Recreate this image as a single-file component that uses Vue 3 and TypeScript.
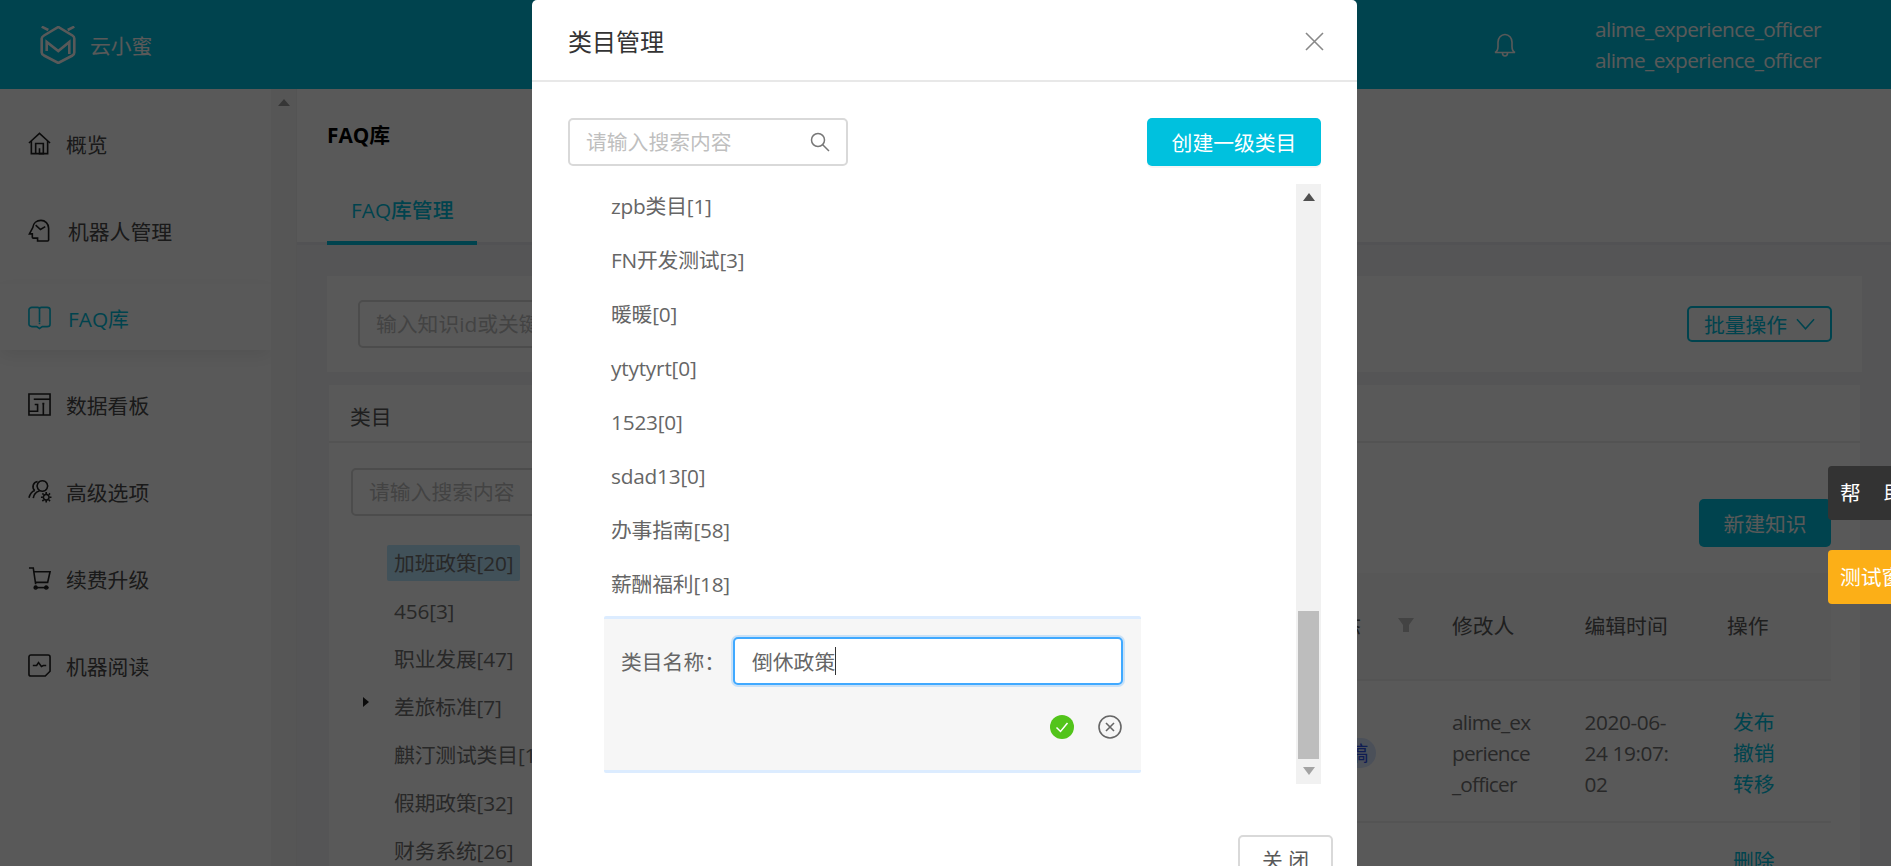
<script setup lang="ts">
interface NavItem {
  label: string
  paths: string[]
  active?: boolean
  nudge?: boolean
}

const navItems: NavItem[] = [
  { label: '概览', paths: ['M1 11.500 12 1.500 23 11.500', 'M3.500 9.500v13h17v-13', 'M8 22.500V12h8v10.500h-4V17'] },
  {
    label: '机器人管理',
    nudge: true,
    paths: [
      'M5 9C5.500 4.500 9 1.500 13.500 1.500c4.500 0 8 3.500 8 8v12.500c0 .5-.5 1-1 1H10v-3H5.500c-.5 0-1-.5-1-1V15.500H1.500z',
      'M8 6.500l5 4.500 5-3',
    ],
  },
  {
    label: 'FAQ库',
    active: true,
    nudge: true,
    paths: [
      'M4 1.500h6c1 0 2 .5 2 1.500 0-1 1-1.500 2-1.500h6c1.500 0 3 1 3 2.500V19c0 1.500-1.500 2.500-3 2.500h-5L12 23.500 9 21.500H4c-1.500 0-3-1-3-2.500V4c0-1.500 1.500-2.500 3-2.500z',
      'M12 3v14',
      'M12 17.500v1.500',
    ],
  },
  {
    label: '数据看板',
    paths: ['M1 1h22v22H1z', 'M6 6.500h17', 'M1 19h9v-7H7', 'M16 11v12', 'M15 11h2'],
  },
  {
    label: '高级选项',
    paths: [
      'M15 .8a5.500 5.500 0 1 1-.01 0z',
      'M10 1.500a5.500 5.500 0 0 0-3 9.500',
      'M7 11c-3 1-5 4-6 7.500',
      'M12 11.500c-4 1-6 4-6.500 7.500',
      'M19 15a3 3 0 1 1-.01 0z',
      'M19 12.500v2M19 21.500v2M13.500 18h2M22.500 18h2M15 14l1.400 1.400M21.600 20.600 23 22M15 22l1.400-1.400M21.600 15.400 23 14',
    ],
  },
  {
    label: '续费升级',
    paths: [
      'M1 1h4.500l2.500 17',
      'M6 5h17l-2.500 11H7.500',
      'M6.500 21.500h15',
      'M8 20a1.500 1.500 0 1 1-.01 0z',
      'M19 20a1.500 1.500 0 1 1-.01 0z',
    ],
  },
  {
    label: '机器阅读',
    paths: [
      'M3 1h18a2 2 0 0 1 2 2v15l-5 5H3a2 2 0 0 1-2-2V3a2 2 0 0 1 2-2z',
      'M5 12h4l2-3 3 4 2-1h3',
    ],
  },
]

const treeRows = ['加班政策[20]', '456[3]', '职业发展[47]', '差旅标准[7]', '麒汀测试类目[12]', '假期政策[32]', '财务系统[26]']
const modalRows = ['zpb类目[1]', 'FN开发测试[3]', '暖暖[0]', 'ytytyrt[0]', '1523[0]', 'sdad13[0]', '办事指南[58]', '薪酬福利[18]']
</script>

<template>
  <div class="app">
    <header class="topbar">
      <div class="brand">
        <svg class="logo" viewBox="0 0 38 38" fill="none">
          <path d="M19.300 1 33.500 9.500c1.200.7 1.800 1.700 1.800 3v14c0 1.300-.6 2.300-1.800 3L19.300 37 5 29.500c-1.200-.7-2.300-1.700-2.300-3v-14c0-1.300 1.100-2.300 2.300-3z" />
          <path d="M2.700.7 9.300 4M35.300.7 28.700 4" />
          <path d="M7.700 25V16l11.600 9 11-9v12" />
        </svg>
        <span class="brand-name">云小蜜</span>
      </div>
      <div class="account">
        <svg class="bell" viewBox="0 0 22 24" fill="none">
          <path d="M1 19.500c2-1 3-3 3-6V9c0-4 3-7.500 7-7.500s7 3.500 7 7.500v4.500c0 3 1 5 3 6z" />
          <path d="M8.500 20c0 2 1 3 2.500 3s2.500-1 2.500-3" />
        </svg>
        <div class="users">
          <div>alime_experience_officer</div>
          <div>alime_experience_officer</div>
        </div>
      </div>
    </header>

    <div class="main">
      <aside class="sidebar">
        <nav class="nav">
          <div v-for="item in navItems" :key="item.label" class="nav-item" :class="{ active: item.active, nudge: item.nudge }">
            <svg class="nav-icon" viewBox="0 0 24 24" fill="none">
              <path v-for="d in item.paths" :key="d" :d="d" />
            </svg>
            <span>{{ item.label }}</span>
          </div>
        </nav>
        <div class="side-track"><i class="side-arrow"></i></div>
      </aside>

      <section class="content">
        <div class="page-head">
          <div class="page-title">FAQ库</div>
          <div class="tabs"><span class="tab">FAQ库管理</span></div>
        </div>

        <div class="page-body">
          <div class="filter-card">
            <input class="field wide" placeholder="输入知识id或关键词搜索内容" />
            <button class="batch">批量操作
              <svg class="chevron" viewBox="0 0 20 12" fill="none"><path d="M1 1l9 10 9-10" /></svg>
            </button>
          </div>

          <div class="kb-card">
            <div class="kb-head">类目</div>
            <div class="kb-body">
              <div class="tree">
                <input class="field" placeholder="请输入搜索内容" />
                <div class="tree-list">
                  <div v-for="(row, i) in treeRows" :key="row" class="tree-row">
                    <i v-if="i === 3" class="tree-caret"></i>
                    <span class="tree-label" :class="{ selected: i === 0 }">{{ row }}</span>
                  </div>
                </div>
              </div>

              <div class="records">
                <div class="records-bar"><button class="create">新建知识</button></div>
                <div class="table-row table-head">
                  <div>知识标题</div>
                  <div class="status-head">状态
                    <svg class="funnel" viewBox="0 0 16 14"><path d="M0 0h16l-5 7v7H5V7z" /></svg>
                  </div>
                  <div>修改人</div>
                  <div>编辑时间</div>
                  <div>操作</div>
                </div>
                <div class="table-row table-cells">
                  <div>年假如何计算</div>
                  <div><span class="badge">草稿</span></div>
                  <div class="wrap user">alime_experience_officer</div>
                  <div class="wrap">2020-06-24 19:07:02</div>
                  <div class="ops"><a>发布</a><a>撤销</a><a>转移</a></div>
                </div>
                <div class="table-row table-cells last">
                  <div>加班申请流程</div>
                  <div></div>
                  <div class="wrap"></div>
                  <div class="wrap"></div>
                  <div class="ops"><a>删除</a></div>
                </div>
              </div>
            </div>
          </div>
        </div>
      </section>
    </div>

    <div class="mask">
      <div class="modal">
        <div class="modal-head">
          <span>类目管理</span>
          <svg class="close" viewBox="0 0 19 19" fill="none"><path d="M1 1l17 17M18 1 1 18" /></svg>
        </div>
        <div class="modal-body">
          <div class="modal-tools">
            <div class="modal-search">
              <input placeholder="请输入搜索内容" />
              <svg viewBox="0 0 20 20" fill="none"><circle cx="8" cy="8" r="6.500" /><path d="M12.500 12.500 19 19" /></svg>
            </div>
            <button class="primary">创建一级类目</button>
          </div>
          <div class="modal-tree">
            <div class="modal-list">
              <div v-for="row in modalRows" :key="row" class="modal-row">{{ row }}</div>
              <div class="edit-form">
                <div class="edit-line">
                  <span class="edit-label">类目名称：</span>
                  <div class="edit-input">倒休政策<i class="caret"></i></div>
                </div>
                <div class="edit-actions">
                  <svg viewBox="0 0 24 24"><circle cx="12" cy="12" r="12" fill="#52c41a" /><path d="M6.500 12.500 10.500 16.500 17.500 8" fill="none" stroke="#fff" stroke-width="1.500" /></svg>
                  <svg viewBox="0 0 24 24" fill="none" stroke="#666" stroke-width="1.600"><circle cx="12" cy="12" r="11" /><path d="M8 8l8 8M16 8l-8 8" /></svg>
                </div>
              </div>
            </div>
            <div class="modal-scroll">
              <i class="arrow-up"></i>
              <i class="thumb"></i>
              <i class="arrow-down"></i>
            </div>
          </div>
          <div class="modal-foot"><button class="ghost">关 闭</button></div>
        </div>
      </div>
    </div>

    <div class="float-tab help">帮助</div>
    <div class="float-tab test">测试窗口</div>
  </div>
</template>

<style>
html,
body {
  margin: 0;
  overflow: hidden;
}
</style>

<style scoped>
* {
  box-sizing: border-box;
}
.app {
  position: relative;
  height: 866px;
  overflow: hidden;
  display: flex;
  flex-direction: column;
  font-family: 'Open Sans', 'Noto Sans CJK SC', sans-serif;
  font-size: 20.8px;
  color: #595959;
  background: #f3f3f6;
}
button,
input {
  font: inherit;
}

/* top bar */
.topbar {
  flex: 0 0 89px;
  display: flex;
  align-items: center;
  padding: 0 70px 0 39px;
  background: #00c1de;
  color: #fff;
}
.brand {
  display: flex;
  align-items: center;
  gap: 13px;
}
.logo {
  width: 38px;
  height: 38px;
  stroke: #fff;
  stroke-width: 2.6;
}
.brand-name {
  font-size: 20.8px;
}
.account {
  margin-left: auto;
  display: flex;
  align-items: center;
  gap: 79px;
}
.bell {
  width: 22px;
  height: 24px;
  stroke: #fff;
  stroke-width: 1.6;
}
.users {
  letter-spacing: -0.58px;
  line-height: 31px;
}

/* sidebar */
.main {
  flex: 1;
  display: flex;
  min-height: 0;
}
.sidebar {
  flex: 0 0 297px;
  display: flex;
  background: #fff;
  border-right: 1px solid #f0f0f0;
}
.nav {
  flex: 0 0 271px;
  padding-top: 21px;
  display: flex;
  flex-direction: column;
  gap: 21px;
}
.nav-item {
  height: 66px;
  flex: none;
  display: flex;
  align-items: center;
  gap: 15px;
  padding: 1px 0 0 28px;
  color: #4a4a4a;
}
.nav-item.nudge {
  gap: 17px;
}
.nav-item.active {
  color: #00c1de;
  background: #fff;
  box-shadow: 0 6px 16px rgba(0, 0, 0, 0.08);
}
.nav-icon {
  width: 23px;
  height: 23px;
  flex: none;
  overflow: visible;
  stroke: #222;
  stroke-width: 1.7;
}
.active .nav-icon {
  stroke: #00c1de;
}
.side-track {
  flex: 1;
  display: flex;
  justify-content: center;
  padding-top: 10px;
  background: #f7f7f7;
}
.side-arrow {
  width: 0;
  height: 0;
  border: 6px solid transparent;
  border-top: 0;
  border-bottom: 7px solid #9a9a9a;
}

/* content */
.content {
  flex: 1;
  min-width: 0;
  display: flex;
  flex-direction: column;
}
.page-head {
  flex: 0 0 156px;
  padding: 32px 0 0 30px;
  background: #fff;
  border-bottom: 3px solid #ececf0;
  display: flex;
  flex-direction: column;
  justify-content: space-between;
}
.page-title {
  font-weight: 700;
  color: #000;
  line-height: 28px;
}
.tabs {
  margin-bottom: -3px;
  display: flex;
}
.tab {
  width: 150px;
  height: 61px;
  padding: 10px 0 0 24px;
  font-weight: 500;
  color: #00c1de;
  border-bottom: 4px solid #00c1de;
  white-space: nowrap;
}
.page-body {
  flex: 1;
  padding: 31px 29px 0 30px;
  display: flex;
  flex-direction: column;
  gap: 13px;
  min-height: 0;
}
.filter-card {
  flex: 0 0 96px;
  background: #fff;
  display: flex;
  align-items: center;
  justify-content: space-between;
  padding: 0 30px 0 31px;
}
.field {
  width: 300px;
  height: 48px;
  padding: 0 16px;
  border: 2px solid #d9d9d9;
  border-radius: 5px;
  color: #595959;
  outline: none;
  background: #fff;
}
.field.wide {
  width: 500px;
}
.field::placeholder {
  color: #bfbfbf;
  opacity: 1;
}
.batch {
  width: 145px;
  height: 36px;
  display: flex;
  align-items: center;
  justify-content: center;
  gap: 9px;
  padding: 0;
  background: #fff;
  color: #00c1de;
  border: 2px solid #00c1de;
  border-radius: 5px;
}
.chevron {
  width: 19px;
  height: 12px;
  stroke: #00c1de;
  stroke-width: 1.6;
}
.kb-card {
  flex: 1;
  margin: 0 2px;
  background: #fff;
  display: flex;
  flex-direction: column;
  min-height: 0;
}
.kb-head {
  flex: 0 0 58px;
  padding: 17px 0 0 21px;
  line-height: 30px;
  border-bottom: 2px solid #eee;
  color: #595959;
}
.kb-body {
  flex: 1;
  display: flex;
  min-height: 0;
}
.tree {
  flex: 0 0 370px;
  padding: 25px 0 0 22px;
}
.tree-list {
  margin-top: 29px;
}
.tree-row {
  position: relative;
  height: 48px;
  padding-left: 36px;
  color: #737373;
  white-space: nowrap;
  line-height: 36px;
}
.tree-label {
  display: inline-block;
  height: 36px;
  padding: 0 7px;
  border-radius: 2px;
  letter-spacing: -0.15px;
}
.tree-label.selected {
  background: #bae7ff;
}
.tree-caret {
  position: absolute;
  left: 12px;
  top: 8px;
  width: 0;
  height: 0;
  border: 5px solid transparent;
  border-right: 0;
  border-left: 6px solid #222;
}
.records {
  flex: 1;
  min-width: 0;
  padding-right: 29px;
}
.records-bar {
  height: 130px;
  padding-top: 56px;
  display: flex;
  justify-content: flex-end;
}
.create {
  width: 132px;
  height: 48px;
  padding: 0;
  color: #fff;
  background: #00c1de;
  border: 0;
  border-radius: 5px;
}
.table-row {
  display: grid;
  grid-template-columns: 1fr 132.500px 132.500px 142.500px 104px;
  border-bottom: 2px solid #f0f0f0;
}
.table-head {
  height: 108px;
  padding-bottom: 2px;
  align-items: center;
  background: #fafafa;
  color: #595959;
}
.status-head {
  display: flex;
  align-items: center;
  white-space: nowrap;
}
.funnel {
  width: 16px;
  height: 14px;
  margin-left: 37px;
  fill: #bfbfbf;
}
.table-cells {
  height: 142px;
  padding-top: 5px;
  align-items: center;
  color: #737373;
  line-height: 31px;
}
.wrap {
  width: 85px;
  word-break: break-all;
  letter-spacing: -0.4px;
}
.wrap.user {
  letter-spacing: -0.8px;
}
.badge {
  display: inline-block;
  width: 56px;
  height: 30px;
  line-height: 30px;
  text-align: center;
  border-radius: 15px;
  color: #2f54eb;
  background: #d6e4ff;
}
.ops {
  display: flex;
  flex-direction: column;
  padding-left: 6px;
  color: #00c1de;
}
.table-cells.last {
  align-items: start;
  padding-top: 23px;
}

/* modal */
.mask {
  position: absolute;
  inset: 0;
  z-index: 5;
  background: rgba(0, 0, 0, 0.65);
}
.modal {
  width: 825px;
  height: 900px;
  margin-left: 532px;
  background: #fff;
  border-radius: 5px;
  color: #666;
}
.modal-head {
  height: 82px;
  padding: 0 33px 0 36px;
  display: flex;
  align-items: center;
  justify-content: space-between;
  font-size: 24px;
  color: #333;
  border-bottom: 2px solid #e8e8e8;
}
.close {
  width: 19px;
  height: 19px;
  margin-top: 3px;
  stroke: #888;
  stroke-width: 1.6;
}
.modal-body {
  padding: 36px 36px 0;
}
.modal-tools {
  display: flex;
  justify-content: space-between;
  height: 48px;
}
.modal-search {
  position: relative;
  width: 280px;
  height: 48px;
}
.modal-search input {
  width: 100%;
  height: 100%;
  padding: 0 48px 0 16px;
  border: 2px solid #d9d9d9;
  border-radius: 5px;
  outline: none;
}
.modal-search input::placeholder {
  color: #bfbfbf;
  opacity: 1;
}
.modal-search svg {
  position: absolute;
  right: 18px;
  top: 14px;
  width: 20px;
  height: 20px;
  stroke: #777;
  stroke-width: 1.5;
}
.primary {
  width: 174px;
  height: 48px;
  padding: 0;
  color: #fff;
  background: #00c1de;
  border: 0;
  border-radius: 5px;
  box-shadow: 0 2px 0 rgba(0, 0, 0, 0.04);
}
.modal-tree {
  display: flex;
  height: 600px;
  margin-top: 18px;
}
.modal-list {
  flex: 1;
  min-width: 0;
  overflow: hidden;
}
.modal-row {
  height: 54px;
  line-height: 54px;
  padding-left: 43px;
  letter-spacing: -0.2px;
}
.modal-row:first-child {
  margin-top: -5px;
}
.edit-form {
  width: 537px;
  height: 157px;
  margin: 5px 0 0 36px;
  padding: 18px 18px 0 17px;
  background: #f6f6f6;
  border-top: 3px solid #dcecff;
  border-bottom: 3px solid #dcecff;
  border-radius: 2px;
}
.edit-line {
  display: flex;
  align-items: center;
  justify-content: space-between;
}
.edit-label {
  white-space: nowrap;
}
.edit-input {
  width: 390px;
  height: 48px;
  display: flex;
  align-items: center;
  padding-left: 17px;
  background: #fff;
  border: 2px solid #40a9ff;
  border-radius: 5px;
  box-shadow: 0 0 0 2px rgba(24, 144, 255, 0.2);
}
.caret {
  width: 1px;
  height: 28px;
  background: #333;
}
.edit-actions {
  display: flex;
  justify-content: flex-end;
  gap: 24px;
  margin-top: 30px;
  padding-right: 1px;
}
.edit-actions svg {
  width: 24px;
  height: 24px;
}
.modal-scroll {
  flex: 0 0 25px;
  display: flex;
  flex-direction: column;
  align-items: center;
  background: #f1f1f1;
}
.arrow-up,
.arrow-down {
  width: 0;
  height: 0;
  border: 6px solid transparent;
}
.arrow-up {
  margin-top: 9px;
  border-top: 0;
  border-bottom: 8px solid #505050;
}
.thumb {
  width: 21px;
  height: 148px;
  margin-top: auto;
  background: #bdbdbd;
}
.arrow-down {
  margin: 8px 0 9px;
  border-bottom: 0;
  border-top: 8px solid #a3a3a3;
}
.modal-foot {
  display: flex;
  justify-content: flex-end;
  margin-top: 51px;
  margin-right: -12px;
}
.ghost {
  width: 95px;
  height: 48px;
  padding: 0;
  color: #595959;
  background: #fff;
  border: 2px solid #d9d9d9;
  border-radius: 5px;
}

/* floating tabs above the mask */
.float-tab {
  position: absolute;
  z-index: 6;
  left: 1828px;
  width: 180px;
  height: 54px;
  padding-left: 12px;
  line-height: 54px;
  color: #fff;
  border-radius: 4px 0 0 4px;
  white-space: nowrap;
}
.help {
  top: 466px;
  background: #333;
  letter-spacing: 23px;
}
.test {
  top: 550px;
  background: #fcaf17;
}
</style>
